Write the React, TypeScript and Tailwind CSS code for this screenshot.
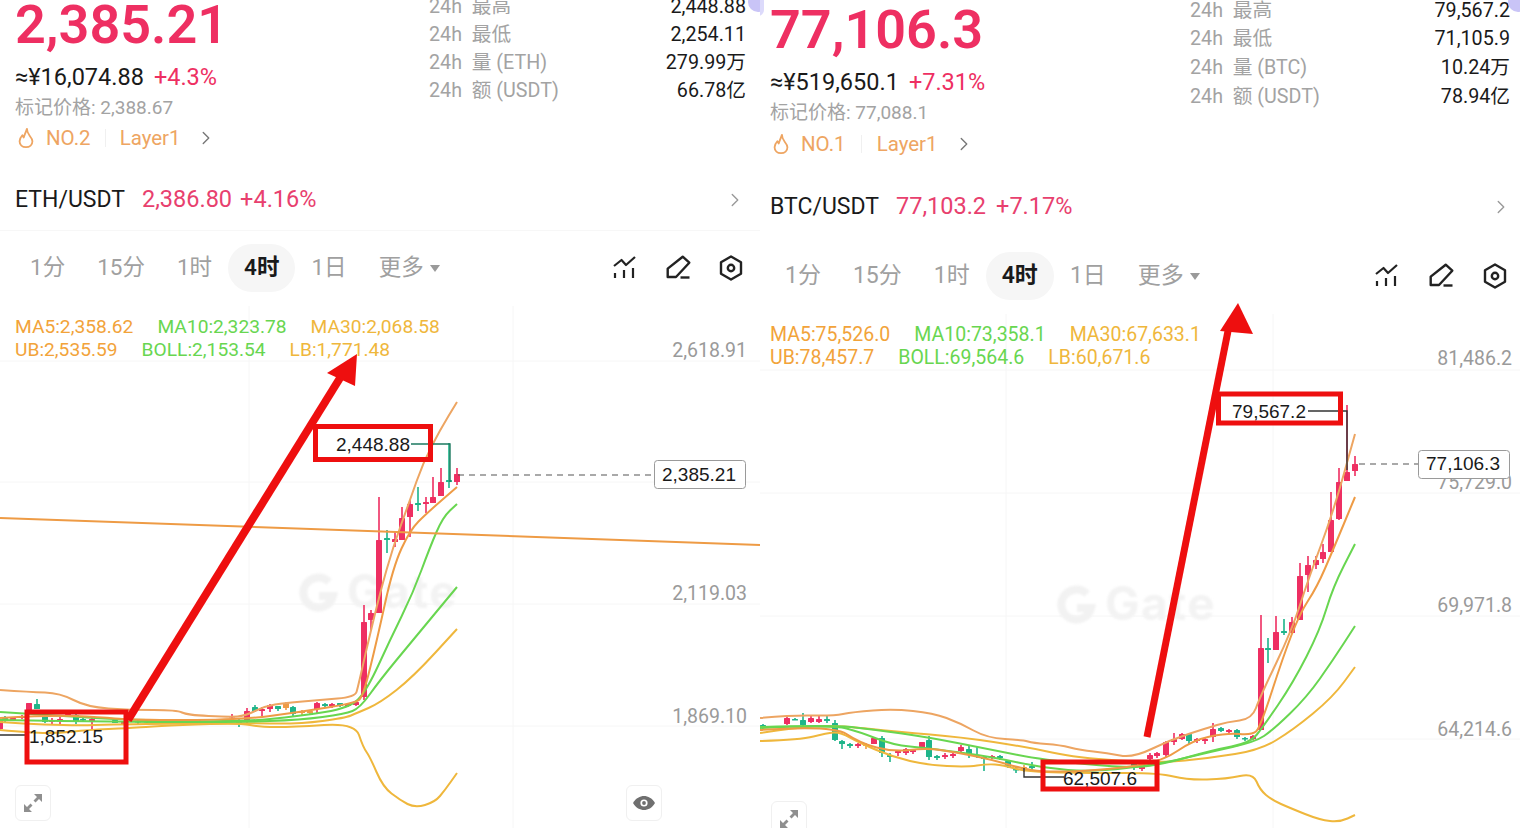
import { ChevronRight } from 'lucide-react';

type Pt = [number, number];
// x, wick top, wick bottom, body top, body bottom, colour key
type Candle = [number, number, number, number, number, 'r' | 'g' | 'o'];

const RED = '#ee2f62';
const GREEN = '#1fb58a';
const ORANGE = '#ee9b45';
const PEACH = '#eda562';
const LIME = '#68d650';
const YELLOW = '#efb73c';

const candleColor = { r: RED, g: GREEN, o: ORANGE };

// rounds the hand-read points into a curve
function smooth(pts: Pt[]) {
  let d = `M${pts[0][0]} ${pts[0][1]}`;
  for (let i = 1; i < pts.length - 1; i++) {
    const mx = (pts[i][0] + pts[i + 1][0]) / 2;
    const my = (pts[i][1] + pts[i + 1][1]) / 2;
    d += ` Q${pts[i][0]} ${pts[i][1]} ${mx} ${my}`;
  }
  const last = pts[pts.length - 1];
  return d + ` L${last[0]} ${last[1]}`;
}

const ethLines: { color: string; pts: Pt[] }[] = [
  { color: YELLOW, pts: [[0, 730], [33, 733], [60, 733], [87, 730], [130, 728], [143, 727], [180, 725], [240, 723], [260, 727], [293, 727], [355, 723], [363, 747], [370, 757], [383, 787], [400, 800], [415, 808], [435, 802], [445, 790], [457, 773]] },
  { color: YELLOW, pts: [[0, 722], [60, 726], [130, 724], [240, 723], [300, 724], [345, 718], [357, 713], [380, 703], [413, 677], [457, 629]] },
  { color: LIME, pts: [[0, 720], [130, 722], [240, 722], [300, 720], [345, 714], [360, 708], [380, 680], [413, 640], [457, 587]] },
  { color: LIME, pts: [[0, 712], [60, 716], [130, 720], [240, 722], [300, 716], [350, 708], [367, 690], [390, 640], [413, 593], [430, 547], [443, 517], [457, 504]] },
  { color: PEACH, pts: [[0, 690], [30, 692], [60, 693], [87, 707], [130, 710], [177, 710], [187, 715], [230, 717], [245, 716], [265, 706], [285, 703], [320, 700], [355, 697], [358, 687], [367, 647], [380, 593], [393, 547], [410, 500], [423, 463], [440, 430], [457, 402]] },
  { color: ORANGE, pts: [[0, 718], [50, 715], [100, 717], [130, 720], [240, 720], [300, 712], [355, 703], [363, 697], [377, 640], [393, 567], [410, 530], [427, 513], [457, 487]] },
];

const ethCandles: Candle[] = [
  [0, 720, 730, 720, 729, 'r'], [5, 716, 722, 718, 720, 'g'], [13, 717, 721, 718, 720, 'r'], [22, 715, 719, 716, 718, 'r'],
  [29, 703, 712, 703, 710, 'r'], [37, 699, 709, 704, 709, 'g'], [45, 714, 723, 716, 722, 'g'], [52, 718, 725, 720, 722, 'r'],
  [60, 717, 725, 719, 722, 'r'], [68, 713, 716, 714, 715, 'r'], [76, 713, 724, 715, 722, 'g'], [83, 718, 722, 719, 720, 'g'],
  [92, 717, 729, 719, 721, 'r'], [115, 720, 723, 720, 723, 'g'], [124, 722, 725, 722, 725, 'r'], [138, 720, 724, 721, 722, 'g'],
  [147, 720, 723, 721, 722, 'g'], [170, 720, 723, 721, 722, 'g'], [200, 720, 723, 721, 722, 'g'], [232, 714, 722, 716, 717, 'r'],
  [239, 719, 727, 720, 723, 'g'], [247, 708, 724, 711, 722, 'r'], [255, 705, 712, 707, 711, 'g'], [262, 707, 716, 709, 711, 'r'],
  [270, 704, 712, 705, 709, 'r'], [278, 706, 711, 706, 709, 'g'], [286, 702, 710, 703, 708, 'o'], [293, 706, 716, 707, 714, 'g'],
  [302, 710, 715, 711, 713, 'o'], [310, 710, 715, 711, 713, 'o'], [317, 702, 714, 703, 709, 'r'], [325, 703, 708, 704, 706, 'g'],
  [332, 703, 708, 704, 706, 'r'], [340, 703, 707, 703, 706, 'g'], [348, 703, 707, 704, 706, 'r'], [356, 701, 706, 702, 705, 'r'],
  [364, 605, 700, 622, 697, 'r'], [371, 610, 630, 613, 620, 'r'], [379, 497, 613, 540, 613, 'r'], [387, 530, 553, 538, 540, 'g'],
  [395, 532, 547, 539, 542, 'r'], [402, 507, 540, 518, 540, 'r'], [410, 500, 537, 504, 517, 'r'], [418, 487, 511, 503, 505, 'g'],
  [426, 497, 513, 502, 504, 'r'], [433, 477, 503, 497, 503, 'r'], [441, 468, 496, 482, 496, 'r'], [449, 443, 488, 480, 482, 'g'],
  [457, 468, 485, 474, 482, 'r'],
];

const btcLines: { color: string; pts: Pt[] }[] = [
  { color: YELLOW, pts: [[760, 741], [800, 740], [827, 733], [840, 732], [860, 743], [893, 757], [927, 765], [967, 767], [987, 764], [1003, 765], [1027, 772], [1093, 773], [1160, 773], [1187, 780], [1227, 779], [1253, 773], [1260, 790], [1272, 800], [1290, 808], [1320, 820], [1340, 822], [1355, 815]] },
  { color: YELLOW, pts: [[760, 733], [793, 728], [833, 725], [900, 732], [960, 737], [1027, 747], [1077, 758], [1160, 763], [1210, 758], [1260, 750], [1293, 730], [1333, 697], [1355, 667]] },
  { color: LIME, pts: [[760, 728], [833, 725], [860, 732], [893, 745], [927, 748], [993, 757], [1043, 768], [1093, 772], [1160, 764], [1210, 752], [1255, 742], [1273, 730], [1307, 697], [1333, 660], [1355, 626]] },
  { color: LIME, pts: [[760, 727], [833, 725], [877, 730], [927, 737], [993, 750], [1043, 760], [1127, 768], [1160, 765], [1213, 750], [1250, 743], [1263, 727], [1293, 683], [1320, 630], [1333, 587], [1355, 544]] },
  { color: ORANGE, pts: [[760, 730], [833, 725], [860, 743], [893, 752], [927, 748], [960, 753], [993, 760], [1020, 768], [1043, 772], [1093, 771], [1160, 763], [1193, 740], [1227, 733], [1252, 735], [1260, 728], [1283, 657], [1300, 613], [1317, 587], [1333, 550], [1355, 497]] },
  { color: PEACH, pts: [[760, 718], [793, 715], [833, 716], [853, 712], [893, 709], [933, 713], [960, 723], [987, 738], [1023, 740], [1033, 743], [1060, 745], [1080, 750], [1107, 753], [1133, 758], [1170, 740], [1207, 728], [1227, 722], [1252, 719], [1260, 697], [1292, 630], [1308, 580], [1333, 513], [1355, 434]] },
];

const btcCandles: Candle[] = [
  [763, 724, 729, 725, 728, 'g'], [787, 716, 725, 718, 724, 'r'], [795, 718, 720, 719, 720, 'g'], [803, 713, 727, 720, 725, 'g'],
  [811, 715, 723, 718, 722, 'r'], [819, 716, 723, 719, 722, 'r'], [827, 716, 723, 719, 721, 'g'], [835, 720, 741, 723, 740, 'g'],
  [842, 740, 749, 741, 744, 'g'], [850, 743, 748, 744, 746, 'g'], [858, 743, 748, 744, 746, 'r'], [866, 743, 749, 744, 746, 'o'],
  [874, 738, 744, 738, 744, 'r'], [882, 736, 757, 738, 753, 'g'], [890, 753, 762, 755, 757, 'g'], [898, 750, 756, 751, 753, 'r'],
  [906, 748, 755, 749, 753, 'r'], [913, 749, 754, 750, 752, 'r'], [922, 742, 748, 742, 748, 'r'], [929, 736, 760, 740, 757, 'g'],
  [937, 755, 760, 756, 758, 'g'], [945, 753, 759, 755, 757, 'r'], [953, 753, 758, 754, 756, 'r'], [961, 745, 752, 747, 751, 'r'],
  [969, 746, 758, 749, 755, 'g'], [977, 746, 758, 755, 756, 'g'], [984, 756, 771, 757, 759, 'g'], [992, 755, 759, 756, 758, 'r'],
  [1000, 755, 760, 756, 758, 'g'], [1008, 760, 768, 761, 767, 'g'], [1016, 767, 773, 769, 770, 'g'], [1024, 765, 772, 767, 770, 'o'],
  [1032, 762, 772, 766, 768, 'g'], [1134, 762, 770, 763, 767, 'g'], [1142, 764, 771, 765, 769, 'r'], [1150, 753, 760, 755, 759, 'r'],
  [1157, 752, 758, 753, 756, 'r'], [1166, 741, 758, 742, 755, 'r'], [1174, 733, 745, 739, 742, 'r'], [1182, 733, 740, 734, 739, 'r'],
  [1189, 733, 744, 734, 741, 'g'], [1197, 738, 743, 739, 741, 'r'], [1205, 738, 744, 739, 741, 'r'], [1213, 723, 742, 729, 737, 'r'],
  [1221, 727, 732, 728, 731, 'g'], [1229, 729, 733, 730, 732, 'r'], [1237, 729, 739, 730, 737, 'g'], [1245, 737, 741, 738, 739, 'g'],
  [1253, 735, 740, 736, 739, 'r'],
  [1261, 615, 730, 648, 730, 'r'], [1268, 638, 663, 648, 650, 'g'], [1276, 616, 650, 632, 650, 'r'], [1284, 619, 635, 631, 633, 'g'],
  [1292, 617, 633, 622, 633, 'r'], [1300, 563, 620, 576, 620, 'r'], [1308, 556, 592, 565, 575, 'r'], [1316, 556, 569, 560, 565, 'r'],
  [1323, 544, 563, 552, 559, 'r'], [1331, 492, 552, 520, 552, 'r'], [1339, 468, 520, 482, 519, 'r'], [1347, 405, 481, 472, 481, 'r'],
  [1355, 456, 476, 464, 471, 'r'],
];

function Candles({ data }: { data: Candle[] }) {
  return (
    <g>
      {data.map(([x, t, b, bt, bb, c], i) => (
        <g key={i} fill={candleColor[c]}>
          <rect x={x - 0.8} y={t} width={1.6} height={b - t} />
          <rect x={x - 3} y={bt} width={6} height={Math.max(bb - bt, 1.5)} rx={0.5} />
        </g>
      ))}
    </g>
  );
}

function Watermark({ x, y }: { x: number; y: number }) {
  return (
    <g className="blur-[1px]">
      <path
        d={`M${x + 27} ${y - 11} A15 15 0 1 0 ${x + 31} ${y + 3} L${x + 17} ${y + 3}`}
        fill="none"
        stroke="#f2f2f2"
        strokeWidth={8}
      />
      <text x={x + 45} y={y + 15} fontSize={46} letterSpacing={1.5} fontWeight={700} fill="#f3f3f3" style={{ fontFamily: 'Inter, sans-serif' }}>
        Gate
      </text>
    </g>
  );
}

function FlameIcon() {
  return (
    <svg width="22" height="22" viewBox="0 0 24 24" fill="none" stroke="#eea562" strokeWidth="2" strokeLinejoin="round" className="mr-[9px]">
      <path d="M13 2c0 3 1 5 3 7.5 2 2.5 3 4 3 6 0 4-3 6.5-7 6.5s-7-2.5-7-6.5c0-2.5 1.2-4.5 3-6.5l1.5 2.5C10.5 8 12 5 13 2z" />
    </svg>
  );
}

function ExpandIcon() {
  return (
    <svg width="20" height="20" viewBox="0 0 20 20" fill="#8f8f8f">
      <path d="M19 1v8l-3-3-3.5 3.5-2-2L14 4l-3-3z" />
      <path d="M1 19v-8l3 3 3.5-3.5 2 2L6 16l3 3z" />
    </svg>
  );
}

function EyeIcon() {
  return (
    <svg width="22" height="14" viewBox="0 0 22 14">
      <path d="M0 7C3 2 7 0 11 0s8 2 11 7c-3 5-7 7-11 7S3 12 0 7z" fill="#6f6f6f" />
      <circle cx="11" cy="7" r="3.6" fill="#fff" />
      <circle cx="11" cy="7" r="1.9" fill="#6f6f6f" />
    </svg>
  );
}

function IndicatorIcon() {
  return (
    <svg width="26" height="26" viewBox="0 0 26 26" fill="none" stroke="#222" strokeWidth="2.2">
      <path d="M2 11l7.5-6 4.5 5 9-8" strokeLinejoin="round" />
      <path d="M3 18v5M12 15v8M21 13v10" />
    </svg>
  );
}

function PencilIcon() {
  return (
    <svg width="26" height="26" viewBox="0 0 26 26" fill="none" stroke="#222" strokeWidth="2.4" strokeLinejoin="round">
      <path d="M2.7 22v-8.4L17.7 1.7l6.6 6L11 22z" />
      <path d="M15.5 22.5h9" />
    </svg>
  );
}

function HexIcon() {
  return (
    <svg width="26" height="26" viewBox="0 0 26 26" fill="none" stroke="#222" strokeWidth="2.4" strokeLinejoin="round">
      <path d="M13 1.5l10 5.8v11.4l-10 5.8-10-5.8V7.3z" />
      <circle cx="13" cy="13" r="3.2" />
    </svg>
  );
}

function StatRow({ label, value, tall }: { label: string; value: string; tall?: boolean }) {
  return (
    <div className={tall ? 'flex items-center justify-between h-[28.7px] text-[19.7px]' : 'flex items-center justify-between h-7 text-[19.7px]'}>
      <span className="text-[#a3a3a3] whitespace-pre">{label}</span>
      <span className="text-[#1a1a1a]">{value}</span>
    </div>
  );
}

function Tabs({ className }: { className: string }) {
  const items = ['1分', '15分', '1时'];
  return (
    <div className={className}>
      {items.map((t) => (
        <span key={t} className="px-4 h-12 flex items-center">{t}</span>
      ))}
      <span className="px-4 h-12 flex items-center rounded-full bg-[#f6f6f6] text-[#1a1a1a] font-semibold">4时</span>
      <span className="px-4 h-12 flex items-center">1日</span>
      <span className="px-4 h-12 flex items-center gap-1.5">
        更多
        <span className="w-0 h-0 border-x-[5px] border-x-transparent border-t-[7px] border-t-[#9a9a9a]" />
      </span>
    </div>
  );
}

function EthChart() {
  return (
    <svg className="absolute inset-0 w-full h-full overflow-visible" viewBox="0 306 760 522">
      <g stroke="#f6f6f6" strokeWidth="1">
        <path d="M0 361H760M0 482H760M0 604H760M0 726H760M249 306V828M513 306V828" />
      </g>
      <Watermark x={302} y={593} />
      <Candles data={ethCandles} />
      {ethLines.map((l, i) => (
        <path key={i} d={smooth(l.pts)} fill="none" stroke={l.color} strokeWidth="2" />
      ))}
      <path d="M0 518L760 545" stroke={ORANGE} strokeWidth="2" />
      <path d="M458 475H654" stroke="#555" strokeWidth="1.2" strokeDasharray="6 5" />
      <path d="M411 444H450V482" fill="none" stroke="#1d7a60" strokeWidth="1.4" />
      <path d="M0 735H26" stroke="#222" strokeWidth="1.4" />
      <g style={{ fontFamily: 'Roboto, sans-serif' }} fontSize="19.5" textAnchor="end" fill="#9a9a9a">
        <text x="747" y="357">2,618.91</text>
        <text x="747" y="600">2,119.03</text>
        <text x="747" y="723">1,869.10</text>
      </g>
      <rect x="654.5" y="460.5" width="91" height="28" rx="3" fill="#fff" stroke="#9a9a9a" />
      <g style={{ fontFamily: '"Liberation Sans", sans-serif' }} fontSize="19" fill="#1a1a1a">
        <text x="662" y="481">2,385.21</text>
        <text x="336" y="451">2,448.88</text>
        <text x="29" y="743">1,852.15</text>
      </g>
      <rect x="315.5" y="426.5" width="115" height="33" fill="none" stroke="#ee0f0f" strokeWidth="5" />
      <rect x="27" y="712" width="99" height="50" fill="none" stroke="#ee0f0f" strokeWidth="5" />
      <path d="M128 720L340 378" stroke="#ee0f0f" strokeWidth="8" />
      <path d="M357 354L327 373L355 386z" fill="#ee0f0f" />
    </svg>
  );
}

function BtcChart() {
  return (
    <svg className="absolute inset-0 w-full h-full overflow-visible" viewBox="760 314 760 514">
      <g stroke="#f6f6f6" strokeWidth="1">
        <path d="M760 370H1520M760 493H1520M760 616H1520M760 739H1520M1006 314V828M1273 314V828" />
      </g>
      <Watermark x={1060} y={605} />
      <Candles data={btcCandles} />
      {btcLines.map((l, i) => (
        <path key={i} d={smooth(l.pts)} fill="none" stroke={l.color} strokeWidth="2" />
      ))}
      <path d="M1359 464H1418" stroke="#555" strokeWidth="1.2" strokeDasharray="6 5" />
      <path d="M1308 411H1347V470" fill="none" stroke="#333" strokeWidth="1.4" />
      <path d="M1024 768V777H1064" fill="none" stroke="#333" strokeWidth="1.4" />
      <g style={{ fontFamily: 'Roboto, sans-serif' }} fontSize="19.5" textAnchor="end" fill="#9a9a9a">
        <text x="1512" y="365">81,486.2</text>
        <text x="1512" y="489">75,729.0</text>
        <text x="1512" y="612">69,971.8</text>
        <text x="1512" y="736">64,214.6</text>
      </g>
      <rect x="1418.5" y="450.5" width="91" height="28" rx="3" fill="#fff" stroke="#9a9a9a" />
      <g style={{ fontFamily: '"Liberation Sans", sans-serif' }} fontSize="19" fill="#1a1a1a">
        <text x="1426" y="470">77,106.3</text>
        <text x="1232" y="418">79,567.2</text>
        <text x="1063" y="785">62,507.6</text>
      </g>
      <rect x="1218.5" y="394" width="122" height="29" fill="none" stroke="#ee0f0f" strokeWidth="5" />
      <rect x="1043" y="762" width="114" height="27" fill="none" stroke="#ee0f0f" strokeWidth="5" />
      <path d="M1147 737L1229 326" stroke="#ee0f0f" strokeWidth="7" />
      <path d="M1238 303L1220 331L1253 334z" fill="#ee0f0f" />
    </svg>
  );
}

export default function App() {
  return (
    <div
      className="grid grid-cols-2 w-[1520px] h-[828px] overflow-hidden bg-white"
      style={{ fontFamily: 'Roboto, "Noto Sans CJK SC", sans-serif' }}
    >
      {/* ETH */}
      <div className="relative flex flex-col h-[828px] overflow-hidden">
        <div className="absolute -top-2 -right-2 w-5 h-5 rounded-full bg-[#c9c4f7]" />
        <div className="flex justify-between pl-[15px] pr-[14px]">
          <div className="flex flex-col">
            <div className="h-[50px] flex items-center text-[54px] font-semibold text-[#ee2f62] leading-none">2,385.21</div>
            <div className="h-[26px] mt-[15px] flex items-center gap-[10px] text-[23.5px]">
              <span className="text-[#1a1a1a]">≈¥16,074.88</span>
              <span className="text-[#ee2f62]">+4.3%</span>
            </div>
            <div className="h-6 mt-[5px] flex items-center text-[19px] text-[#a3a3a3]">标记价格: 2,388.67</div>
            <div className="h-6 mt-[6px] flex items-center text-[20.5px] text-[#eea562]">
              <FlameIcon />
              <span>NO.2</span>
              <span className="w-px h-[18px] bg-[#f0f0f0] mx-[14px]" />
              <span>Layer1</span>
              <ChevronRight size={22} strokeWidth={1.5} className="ml-[14px] text-[#777]" />
            </div>
          </div>
          <div className="w-[317px] -mt-[7px] flex flex-col">
            <StatRow label="24h  最高" value="2,448.88" />
            <StatRow label="24h  最低" value="2,254.11" />
            <StatRow label="24h  量 (ETH)" value="279.99万" />
            <StatRow label="24h  额 (USDT)" value="66.78亿" />
          </div>
        </div>
        <div className="h-[30px] mt-[35px] pl-[15px] pr-[14px] flex items-center text-[23.5px]">
          <span className="text-[#1a1a1a] text-[23px] mr-[17px]">ETH/USDT</span>
          <span className="text-[#e8406e]">2,386.80</span>
          <span className="text-[#e8406e] ml-2">+4.16%</span>
          <ChevronRight size={22} strokeWidth={1.5} className="ml-auto text-[#999]" />
        </div>
        <div className="h-px mt-[15px] bg-[#f7f7f7]" />
        <div className="h-12 mt-[13px] pl-[14px] pr-[16px] flex items-center justify-between">
          <Tabs className="flex items-center text-[22.5px] text-[#a0a0a0]" />
          <div className="flex items-center gap-[27px]">
            <IndicatorIcon />
            <PencilIcon />
            <HexIcon />
          </div>
        </div>
        <div className="relative flex-1 mt-[14px]">
          <EthChart />
          <div className="absolute left-[15px] top-[9px] flex flex-col text-[19.2px] leading-[23px]">
            <div className="flex gap-6">
              <span className="text-[#f2a33a]">MA5:2,358.62</span>
              <span className="text-[#68d650]">MA10:2,323.78</span>
              <span className="text-[#efb73c]">MA30:2,068.58</span>
            </div>
            <div className="flex gap-6">
              <span className="text-[#f2a33a]">UB:2,535.59</span>
              <span className="text-[#68d650]">BOLL:2,153.54</span>
              <span className="text-[#efb73c]">LB:1,771.48</span>
            </div>
          </div>
          <div className="absolute left-[15px] bottom-[7px] w-9 h-9 rounded-md border border-[#f0f0f0] bg-white flex items-center justify-center">
            <ExpandIcon />
          </div>
          <div className="absolute right-[98px] bottom-[7px] w-9 h-9 rounded-md border border-[#f0f0f0] bg-white flex items-center justify-center">
            <EyeIcon />
          </div>
        </div>
      </div>

      {/* BTC */}
      <div className="relative flex flex-col h-[828px] overflow-hidden">
        <div className="absolute -top-2 -left-2 w-3 h-6 rounded-full bg-[#dcdafb]" />
        <div className="absolute -top-2 -right-2 w-5 h-5 rounded-full bg-[#c9c4f7]" />
        <div className="flex justify-between pt-[5px] pl-[10px] pr-[10px]">
          <div className="flex flex-col">
            <div className="h-[50px] flex items-center text-[54px] font-semibold text-[#ee2f62] leading-none">77,106.3</div>
            <div className="h-[26px] mt-[15px] flex items-center gap-[10px] text-[23.5px]">
              <span className="text-[#1a1a1a]">≈¥519,650.1</span>
              <span className="text-[#ee2f62]">+7.31%</span>
            </div>
            <div className="h-6 mt-[5px] flex items-center text-[19px] text-[#a3a3a3]">标记价格: 77,088.1</div>
            <div className="h-6 mt-[7px] flex items-center text-[20.5px] text-[#eea562]">
              <FlameIcon />
              <span>NO.1</span>
              <span className="w-px h-[18px] bg-[#f0f0f0] mx-[15px]" />
              <span>Layer1</span>
              <ChevronRight size={22} strokeWidth={1.5} className="ml-[15px] text-[#777]" />
            </div>
          </div>
          <div className="w-[320px] -mt-[9px] flex flex-col">
            <StatRow tall label="24h  最高" value="79,567.2" />
            <StatRow tall label="24h  最低" value="71,105.9" />
            <StatRow tall label="24h  量 (BTC)" value="10.24万" />
            <StatRow tall label="24h  额 (USDT)" value="78.94亿" />
          </div>
        </div>
        <div className="h-[30px] mt-9 pl-[10px] pr-[8px] flex items-center text-[23.5px]">
          <span className="text-[#1a1a1a] text-[23px] mr-[17px]">BTC/USDT</span>
          <span className="text-[#e8406e]">77,103.2</span>
          <span className="text-[#e8406e] ml-2.5">+7.17%</span>
          <ChevronRight size={22} strokeWidth={1.5} className="ml-auto text-[#999]" />
        </div>
        <div className="h-12 mt-[30px] pl-[9px] pr-[12px] flex items-center justify-between">
          <Tabs className="flex items-center text-[23px] text-[#a0a0a0]" />
          <div className="flex items-center gap-[28px]">
            <IndicatorIcon />
            <PencilIcon />
            <HexIcon />
          </div>
        </div>
        <div className="relative flex-1 mt-[14px]">
          <BtcChart />
          <div className="absolute left-[10px] top-[9px] flex flex-col text-[19.5px] leading-[23px]">
            <div className="flex gap-6">
              <span className="text-[#f2a33a]">MA5:75,526.0</span>
              <span className="text-[#68d650]">MA10:73,358.1</span>
              <span className="text-[#efb73c]">MA30:67,633.1</span>
            </div>
            <div className="flex gap-6">
              <span className="text-[#f2a33a]">UB:78,457.7</span>
              <span className="text-[#68d650]">BOLL:69,564.6</span>
              <span className="text-[#efb73c]">LB:60,671.6</span>
            </div>
          </div>
          <div className="absolute left-[11px] -bottom-[9px] w-9 h-9 rounded-md border border-[#f0f0f0] bg-white flex items-center justify-center">
            <ExpandIcon />
          </div>
        </div>
      </div>
    </div>
  );
}
